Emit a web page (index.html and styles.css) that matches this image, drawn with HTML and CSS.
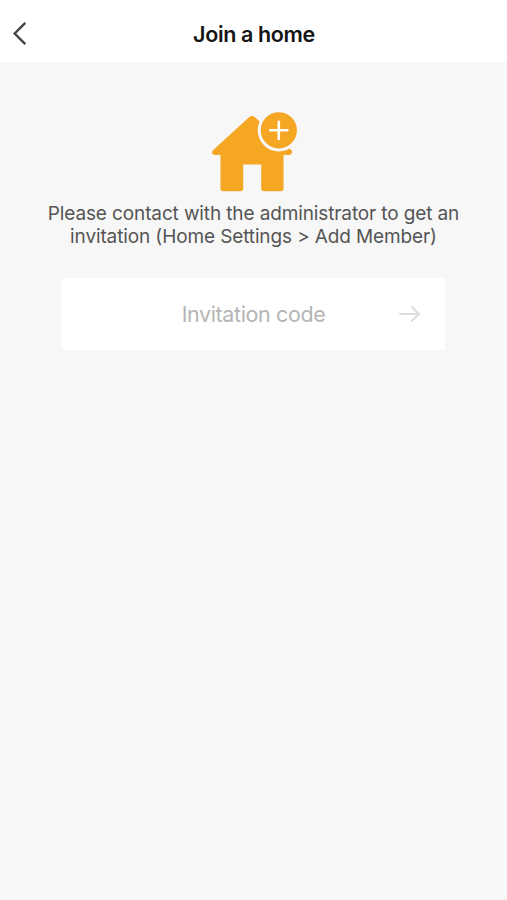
FILE: index.html
```html
<!DOCTYPE html>
<html lang="en">
<head>
<meta charset="utf-8">
<meta name="viewport" content="width=device-width, initial-scale=1">
<title>Join a home</title>
<link rel="stylesheet" href="styles.css">
</head>
<body>
<header class="navbar">
  <button class="back" aria-label="Back">
    <svg width="16" height="26" viewBox="0 0 16 26"><path d="M13.300 1.800 2.700 12.500l10.600 10.600"/></svg>
  </button>
  <h1 class="title">Join a home</h1>
</header>
<main class="content">
  <svg class="home-icon" width="90" height="84" viewBox="0 0 90 84">
    <path class="house" d="M39.300 9Q42 6.800 44.700 9L81.200 42C83.200 44 81.700 47 79.200 47H73.500V80.500Q73.500 83.300 70.700 83.300H54Q51.200 83.300 51.200 80.500V56.500H33.200V80.500Q33.200 83.300 30.400 83.300H13.300Q10.500 83.300 10.500 80.500V47H5C2 47 1 44 3.200 42Z"/>
    <circle class="badge" cx="68.800" cy="22.300" r="19.600"/>
    <path class="plus" d="M68.800 13.700v17.200M60.200 22.300h17.200"/>
  </svg>
  <p class="message">Please contact with the administrator to get an<br>invitation (Home Settings &gt; Add Member)</p>
  <form class="code-box">
    <span class="placeholder">Invitation code</span>
    <svg class="arrow" width="24" height="20" viewBox="0 0 24 20"><path d="M2 10h19M13.800 3l7.200 7-7.200 7"/></svg>
  </form>
</main>
</body>
</html>
```
FILE: styles.css
```css
* { box-sizing: border-box; }
body {
  margin: 0;
  min-height: 100vh;
  background: #f7f7f7;
  font-family: Inter, "Liberation Sans", sans-serif;
}
.navbar {
  display: grid;
  grid-template-columns: 60px 1fr 60px;
  align-items: center;
  height: 62px;
  padding-top: 5px;
  background: #fff;
}
.back {
  display: flex;
  padding: 0 0 0 12px;
  border: 0;
  background: none;
}
.back path { fill: none; stroke: #444; stroke-width: 2.4; }
.title {
  margin: 0;
  text-align: center;
  white-space: nowrap;
  font-size: 21.5px;
  line-height: 28px;
  font-weight: 600;
  letter-spacing: -0.36px;
  text-indent: 1px;
  color: #141414;
}
.content {
  display: flex;
  flex-direction: column;
  align-items: center;
  padding-top: 46px;
}
.home-icon { margin-left: 3px; }
.house, .badge { fill: #f5a623; }
.badge { stroke: #f7f7f7; stroke-width: 3; }
.plus { stroke: #fff; stroke-width: 2.6; stroke-linecap: round; }
.message {
  margin: 10px 0 0;
  text-align: center;
  white-space: nowrap;
  font-size: 19px;
  line-height: 23px;
  letter-spacing: -0.12px;
  color: #555;
}
.code-box {
  display: grid;
  grid-template-columns: 60px 1fr 60px;
  align-items: center;
  width: 383px;
  height: 72px;
  margin-top: 30px;
  border-radius: 3px;
  background: #fff;
}
.placeholder {
  grid-column: 2;
  text-align: center;
  font-size: 21.5px;
  letter-spacing: -0.38px;
  color: #b5b5b5;
}
.arrow { margin-left: 13px; fill: none; stroke: #dedede; stroke-width: 2; stroke-linecap: round; }
```
